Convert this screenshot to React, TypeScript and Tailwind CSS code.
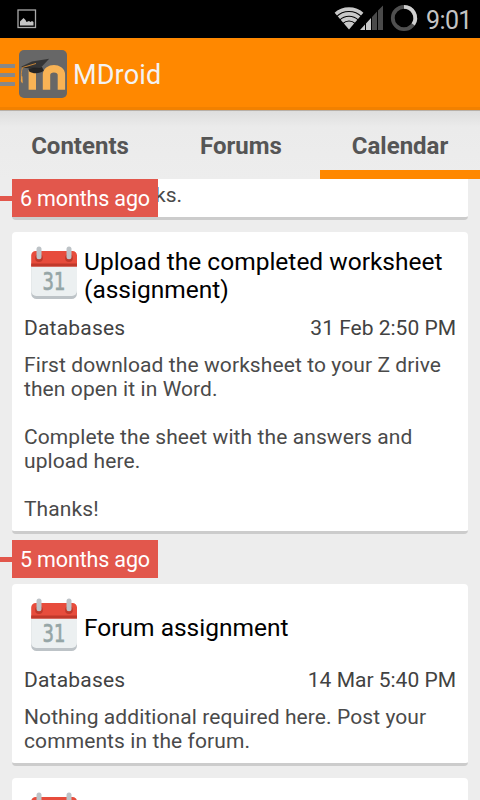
import React from "react";

function CalendarIcon({ day }: { day?: string }) {
  return (
    <svg width="48" height="54" viewBox="0 0 48 54" className="block shrink-0">
      <path d="M1.2 20V47.5a5.5 5.5 0 0 0 5.5 5.5h34.8a5.5 5.5 0 0 0 5.5-5.5V20z" fill="#bdc3c7" />
      <path d="M1.2 19V45a5 5 0 0 0 5 5h35.8a5 5 0 0 0 5-5V19z" fill="#ecf0f1" />
      <path d="M1.2 20.5V9.5a4.5 4.5 0 0 1 4.5-4.5h36.8a4.5 4.5 0 0 1 4.5 4.5V20.5z" fill="#e74c3c" />
      <path d="M1.2 17.5h45.8v3h-45.8z" fill="#c0392b" />
      <circle cx="9" cy="12" r="3.9" fill="#c0392b" />
      <circle cx="39" cy="12" r="3.9" fill="#c0392b" />
      <rect x="6.5" y="0.6" width="5" height="12.6" rx="2.5" fill="#bdc3c7" />
      <rect x="36.5" y="0.6" width="5" height="12.6" rx="2.5" fill="#bdc3c7" />
      {day && (
        <text x="12.6" y="43.5" textLength="22.8" lengthAdjust="spacingAndGlyphs" fontSize="24.5" fill="#95a5a6" stroke="#95a5a6" strokeWidth="0.7" fontFamily="DejaVu Sans, sans-serif">{day}</text>
      )}
    </svg>
  );
}

function StatusBar() {
  return (
    <div className="flex h-[38px] shrink-0 items-center bg-black">
      <svg width="20" height="20" viewBox="0 0 20 20" className="ml-[17px]">
        <rect x="1" y="1" width="17.5" height="17.5" fill="none" stroke="#aaa" strokeWidth="1.3" />
        <path d="M3 16.500v-4l2-2 1.500-1.500 2 2 1 2 2.500-1 1.500 1 1.500-1 1.500 1v3.500z" fill="#c5c5c5" />
      </svg>
      <svg width="90" height="38" viewBox="0 0 90 38" className="ml-[297px]">
        <defs>
          <clipPath id="wifi"><path d="M15 29.5L0 12A24 24 0 0 1 30 12z" /></clipPath>
        </defs>
        <g clipPath="url(#wifi)" fill="none" stroke="#c8c8c8">
          <circle cx="15" cy="29.5" r="20.3" strokeWidth="3.7" />
          <circle cx="15" cy="29.5" r="15.6" strokeWidth="3.7" />
          <circle cx="15" cy="29.5" r="10.9" strokeWidth="3.7" />
          <circle cx="15" cy="29.5" r="4" strokeWidth="8" />
        </g>
        <path d="M26 30L31 24.500v5.500z M32 23.500l5-5.500V30h-5z" fill="#c8c8c8" />
        <path d="M38 17l5-5.500V30h-5z M44 10.500l5-5V30h-5z" fill="#4a4a4a" />
        <circle cx="70" cy="18" r="11.2" fill="none" stroke="#4f4f4f" strokeWidth="3.8" />
        <path d="M70 6.800A11.200 11.200 0 0 1 79.200 24.400" fill="none" stroke="#d0d0d0" strokeWidth="3.8" />
      </svg>
      <span className="ml-[2px] mt-[3px] whitespace-nowrap text-[25px] leading-[35px] tracking-[-0.6px] text-[#c4c4c4]">9:01</span>
    </div>
  );
}

function ActionBar() {
  return (
    <div className="flex h-[72px] shrink-0 items-center border-b-[3px] border-[#f28100] bg-[#ff8800]">
      <svg width="67" height="48" viewBox="0 0 67 48" className="mt-[3px] shrink-0">
        <path d="M0 14h15v4H0zM0 23h15v4H0zM0 32h15v4H0z" fill="#888" />
        <rect x="19" y="0" width="48" height="48" rx="5" fill="#676767" />
        <path d="M32.300 39.800V20M46.500 39.800V25c0-8.300 14.900-8.300 14.900 0V39.800" fill="none" stroke="#f8b355" strokeWidth="7.4" />
        <path d="M28.500 18.500L42 17l1.800 3.500c-3 2.800-10 4-14.600 1z" fill="#242424" />
        <path d="M21 16.800L32 11.500l17.200-2.700L40 18.500z" fill="#353535" />
        <path d="M22 17.300l19 1.200" stroke="#222" strokeWidth="1" />
        <path d="M36 13.500l-13.500 4q-2 5-.6 15" fill="none" stroke="#d8903a" strokeWidth="0.9" />
        <path d="M21.300 26l-.5 5 1.800 2.500-.2-7z" fill="#f0a547" />
      </svg>
      <span className="ml-[6px] mt-[4px] text-[27px] leading-[36px] tracking-[0.15px] text-[#f3f3f3]">MDroid</span>
    </div>
  );
}

function Tabs() {
  return (
    <div className="grid h-[69px] shrink-0 grid-cols-3 border-t border-[#b8b0a8] bg-linear-to-b from-[#dedede] via-[#ebebeb] via-[16px] to-[#ededed] text-center text-[24px] font-bold leading-[30px] text-[#555]">
      <div className="pt-[20px]">Contents</div>
      <div className="pl-[2px] pt-[20px]">Forums</div>
      <div className="border-b-[9px] border-[#ff8800] pt-[20px]">Calendar</div>
    </div>
  );
}

function TimeBadge({ text }: { text: string }) {
  return (
    <div className="flex h-[38px] items-center">
      <div className="h-[5px] w-3 bg-[#e2574c]" />
      <div className="h-[38px] w-[146px] whitespace-nowrap bg-[#e2574c] pl-2 text-[21.5px] leading-[40px] tracking-[-0.15px] text-white">{text}</div>
    </div>
  );
}

type CardProps = { title: string[]; course: string; date: string; body: string[] };

function EventCard({ title, course, date, body }: CardProps) {
  return (
    <div className="mx-3 rounded-[4px] border-b-[3px] border-[#ccc] bg-white px-3 pb-[10px] pt-[14px]">
      <div className="flex h-[56px] items-center pl-[6px]">
        <div className="h-[56px]"><CalendarIcon day="31" /></div>
        <div className="ml-[6px] mt-[4px] whitespace-nowrap text-[24.5px] leading-[28px] text-black">
          {title.map((t) => <div key={t}>{t}</div>)}
        </div>
      </div>
      <div className="mt-[12px] flex justify-between text-[21px] leading-[28px] text-[#424242]">
        <span className="tracking-[0.2px]">{course}</span>
        <span>{date}</span>
      </div>
      <div className="mt-[11px] whitespace-nowrap text-[21px] leading-[24px] tracking-[0.09px] text-[#4a4a4a]">
        {body.map((line, i) => <div key={i} className="h-6">{line}</div>)}
      </div>
    </div>
  );
}

export default function App() {
  return (
    <div className="flex h-[800px] w-[480px] flex-col overflow-hidden bg-[#ededed] font-[Roboto,sans-serif]">
      <StatusBar />
      <ActionBar />
      <Tabs />
      <div className="relative min-h-0 flex-1 overflow-hidden">
        <div className="mx-3 h-[41px] rounded-b-[4px] border-b-[3px] border-[#ccc] bg-white pl-[143px] text-[21px] leading-[32px] text-[#4a4a4a]">ks.</div>
        <div className="absolute left-0 top-0"><TimeBadge text="6 months ago" /></div>
        <div className="h-3" />
        <EventCard
          title={["Upload the completed worksheet", "(assignment)"]}
          course="Databases"
          date="31 Feb 2:50 PM"
          body={["First download the worksheet to your Z drive", "then open it in Word.", "", "Complete the sheet with the answers and", "upload here.", "", "Thanks!"]}
        />
        <div className="py-[6px]"><TimeBadge text="5 months ago" /></div>
        <EventCard
          title={["Forum assignment"]}
          course="Databases"
          date="14 Mar 5:40 PM"
          body={["Nothing additional required here. Post your", "comments in the forum."]}
        />
        <div className="mx-3 mt-3 h-[60px] rounded-t-[4px] bg-white pl-[18px] pt-[14px]"><CalendarIcon /></div>
      </div>
    </div>
  );
}
